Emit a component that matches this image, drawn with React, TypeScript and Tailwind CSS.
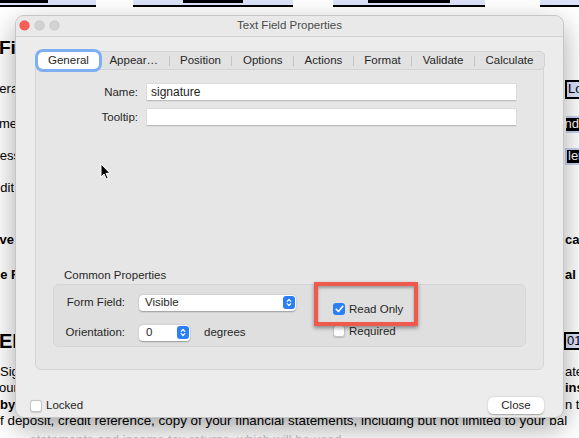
import React from "react";

const tabs = ["General", "Appear…", "Position", "Options", "Actions", "Format", "Validate", "Calculate"];

const Stepper = () => (
  <span className="flex h-[13px] w-[12px] items-center justify-center rounded-[3px] bg-[#2a7ff6]">
    <svg width="6" height="9" viewBox="0 0 6 9" fill="none" stroke="white" strokeWidth="1.2" strokeLinecap="round" strokeLinejoin="round">
      <path d="M1.2 3.3 L3 1.5 L4.8 3.3 M1.2 5.7 L3 7.5 L4.8 5.7" />
    </svg>
  </span>
);

const Box = ({ checked }: { checked?: boolean }) =>
  checked ? (
    <span className="flex h-[12px] w-[12px] items-center justify-center rounded-[3px] bg-[#2a7ff6]">
      <svg width="9" height="8" viewBox="0 0 9 8" fill="none" stroke="white" strokeWidth="1.6" strokeLinecap="round" strokeLinejoin="round">
        <path d="M1.2 4.2 L3.5 6.5 L7.8 1.3" />
      </svg>
    </span>
  ) : (
    <span className="h-[12px] w-[12px] rounded-[3px] border border-[#c3c3c3] bg-white shadow-[0_0.5px_1px_rgba(0,0,0,0.15)]" />
  );

const Doc: React.FC = () => (
  <div className="flex flex-col font-['Liberation_Sans',Arial,sans-serif] text-[13px] text-black">
    {/* top form strip */}
    <div className="flex h-[7px]">
      <div className="flex h-full w-[96px] flex-col border-b-2 border-black bg-[#dde3fb]">
        <div className="h-[3px] w-[48px] bg-black" />
      </div>
      <div className="w-[37px]" />
      <div className="flex h-full w-[160px] border-b-2 border-black bg-[#dde3fb] pl-[50px]">
        <div className="h-[3px] w-[60px] bg-black" />
      </div>
      <div className="w-[40px]" />
      <div className="flex h-full w-[152px] border-b-2 border-black bg-[#dde3fb] pl-[35px]">
        <div className="h-[3px] w-[82px] bg-black" />
      </div>
      <div className="w-[55px]" />
      <div className="h-full flex-1 border-b-2 border-black bg-[#dde3fb]" />
    </div>

    <div className="mt-[31px] flex h-[20px] items-center">
      <span className="-ml-[1px] text-[19px] font-bold">First</span>
    </div>

    <div className="mt-[21px] flex h-[20px] items-center justify-between">
      <div className="flex w-[21px] justify-end overflow-hidden whitespace-nowrap">General</div>
      <div className="flex h-[19px] w-[14px] items-center overflow-hidden whitespace-nowrap border-y-2 border-l-2 border-black bg-[#dde3fb] pl-[1px]">Lo</div>
    </div>

    <div className="mt-[15px] flex h-[20px] items-center justify-between">
      <div className="flex w-[17px] justify-end overflow-hidden whitespace-nowrap">Name</div>
      <div className="flex h-[17px] w-[13px] items-center justify-end overflow-hidden whitespace-nowrap border-y-2 border-[#c9d0f0] bg-black text-white">send</div>
    </div>

    <div className="mt-[12px] flex h-[20px] items-center justify-between">
      <div className="flex w-[20px] justify-end overflow-hidden whitespace-nowrap">Address</div>
      <div className="flex h-[17px] w-[14px] items-center overflow-hidden whitespace-nowrap border-y-2 border-l-2 border-[#c9d0f0] bg-black pl-[1px] text-white">len</div>
    </div>

    <div className="mt-[12px] flex h-[20px] items-center">
      <div className="flex w-[14px] justify-end overflow-hidden whitespace-nowrap">Credit</div>
    </div>

    <div className="mt-[32px] flex h-[20px] items-center justify-between font-bold">
      <div className="flex w-[14px] justify-end overflow-hidden whitespace-nowrap">Have</div>
      <div className="w-[14px] overflow-hidden whitespace-nowrap">cat</div>
    </div>

    <div className="mt-[15px] flex h-[20px] items-center justify-between font-bold">
      <div className="flex w-[19px] justify-end overflow-hidden whitespace-nowrap">The F</div>
      <div className="w-[14px] overflow-hidden whitespace-nowrap">al i</div>
    </div>

    <div className="mt-[45px] flex h-[22px] items-center justify-between">
      <span className="-ml-[1px] text-[20px] font-bold">EF</span>
      <div className="flex h-[18px] w-[15px] items-center overflow-hidden whitespace-nowrap border-2 border-r-0 border-black bg-[#dde3fb] pl-[1px]">01/</div>
    </div>

    <div className="mt-[12px] flex h-[16px] items-center justify-between">
      <span>Signature</span>
      <div className="w-[14px] overflow-hidden whitespace-nowrap">ate</div>
    </div>
    <div className="flex h-[16px] items-center justify-between">
      <span className="-ml-[1px]">our</span>
      <div className="w-[14px] overflow-hidden whitespace-nowrap font-bold">ins</div>
    </div>
    <div className="mt-[1px] flex h-[16px] items-center justify-between">
      <span className="font-bold">by</span>
      <div className="w-[14px] overflow-hidden whitespace-nowrap">n t</div>
    </div>
    <div className="flex h-[16px] items-center overflow-hidden whitespace-nowrap text-[13.4px]">
      f deposit, credit reference, copy of your financial statements, including but not limited to your bal
    </div>
    <div className="mt-[3px] flex h-[16px] items-center overflow-hidden whitespace-nowrap pl-[30px] text-[#c4c4c4]">
      statements and income tax returns, which will be used
    </div>
  </div>
);

const Dialog: React.FC = () => (
  <div className="absolute left-[15px] top-[15px] flex h-[403px] w-[549px] flex-col rounded-[9px] border border-[#c6c6c6] bg-[#ececec] font-['Liberation_Sans',Arial,sans-serif] text-[11.5px] text-[#262626] shadow-[0_10px_28px_rgba(0,0,0,0.35)]">
    {/* title bar */}
    <div className="relative flex h-[21px] shrink-0 items-center justify-center rounded-t-[9px] border-b border-[#d2d2d2] bg-[#e9e9e9]">
      <div className="absolute left-[4px] top-[5px] flex gap-[6px]">
        <span className="h-[9px] w-[9px] rounded-full bg-[#fd5e56] ring-[0.5px] ring-[#e0443e]" />
        <span className="h-[9px] w-[9px] rounded-full bg-[#d2d2d2] ring-[0.5px] ring-[#bdbdbd]" />
        <span className="h-[9px] w-[9px] rounded-full bg-[#d2d2d2] ring-[0.5px] ring-[#bdbdbd]" />
      </div>
      <span className="text-[11.5px] text-[#4a4a4a]">Text Field Properties</span>
    </div>

    <div className="flex flex-1 flex-col px-[19px] pt-[14px]">
      {/* tabs */}
      <div className="relative z-10 -mb-[10px] flex pl-[2px]">
        <div className="flex h-[19px] items-center rounded-[5px] border border-[#d3d3d3] bg-[#e2e2e2]">
          {tabs.map((t, i) => (
            <React.Fragment key={t}>
              {i > 1 && <span className="h-[10px] w-px bg-[#c4c4c4]" />}
              {i === 0 ? (
                <span className="flex h-[17px] items-center rounded-[5px] bg-white px-[10px] ring-[3px] ring-[#7eaff2]">
                  {t}
                </span>
              ) : (
                <span className="px-[10.5px]">{t}</span>
              )}
            </React.Fragment>
          ))}
        </div>
      </div>

      {/* content box */}
      <div className="flex h-[310px] flex-col rounded-[6px] border border-[#d5d5d5] bg-[#e6e6e6] pb-[22px] pt-[23px]">
        <div className="flex items-center">
          <span className="w-[102px] text-right">Name:</span>
          <div className="ml-[9px] flex h-[17px] w-[369px] items-center border-b border-[#bdbdbd] bg-white pl-[4px] text-[12px] text-[#1e1e1e] shadow-[0_0_0_0.5px_#d0d0d0]">
            signature
          </div>
        </div>
        <div className="mt-[8px] flex items-center">
          <span className="w-[102px] text-right">Tooltip:</span>
          <div className="ml-[9px] h-[17px] w-[369px] border-b border-[#bdbdbd] bg-white shadow-[0_0_0_0.5px_#d0d0d0]" />
        </div>

        <div className="mt-auto pl-[28px] leading-[14px]">Common Properties</div>
        <div className="mx-[17px] mt-[2px] flex h-[63px] rounded-[6px] border border-[#d6d6d6] bg-[#dfdfdf] pt-[9px]">
          <div className="flex w-[279px] shrink-0 flex-col gap-[13px]">
            <div className="flex items-center">
              <span className="w-[71px] text-right">Form Field:</span>
              <div className="ml-[14px] flex h-[16px] w-[157px] items-center justify-between rounded-[4px] bg-white pl-[6px] pr-[1px] shadow-[0_0.5px_1.5px_rgba(0,0,0,0.3)]">
                <span>Visible</span>
                <Stepper />
              </div>
            </div>
            <div className="flex items-center">
              <span className="w-[71px] text-right">Orientation:</span>
              <div className="ml-[14px] flex h-[16px] w-[51px] items-center justify-between rounded-[4px] bg-white pl-[7px] pr-[1px] shadow-[0_0.5px_1.5px_rgba(0,0,0,0.3)]">
                <span>0</span>
                <Stepper />
              </div>
              <span className="ml-[14px]">degrees</span>
            </div>
          </div>
          <div className="flex flex-col gap-[10px] pt-[9px] leading-[12px]">
            <div className="flex h-[12px] items-center gap-[4px]">
              <Box checked />
              <span>Read Only</span>
            </div>
            <div className="flex h-[12px] items-center gap-[4px]">
              <Box />
              <span>Required</span>
            </div>
          </div>
        </div>
      </div>

      {/* bottom bar */}
      <div className="mt-[27px] flex items-center justify-between">
        <div className="-ml-[5px] flex items-center gap-[4px]">
          <Box />
          <span>Locked</span>
        </div>
        <button className="flex h-[17px] w-[56px] items-center justify-center rounded-[5px] bg-white text-[11.5px] text-[#262626] shadow-[0_0.5px_1.5px_rgba(0,0,0,0.3)]">
          Close
        </button>
      </div>
    </div>

    {/* annotation frame */}
    <div className="absolute left-[298px] top-[266px] h-[44px] w-[104px] border-[4px] border-[#f05a4c] shadow-[0_2px_4px_rgba(0,0,0,0.4),inset_0_2px_3px_rgba(0,0,0,0.3)]" />

    {/* mouse pointer */}
    <svg className="absolute left-[84px] top-[147px]" width="11" height="17" viewBox="0 0 11 17">
      <path d="M1 1 L1 14 L4 11 L6.3 16 L8.2 15.2 L6 10.3 L10 10.3 Z" fill="black" stroke="white" strokeWidth="1" strokeLinejoin="round" />
    </svg>
  </div>
);

export default function App() {
  return (
    <div className="relative h-[438px] w-[579px] overflow-hidden bg-white">
      <Doc />
      <Dialog />
    </div>
  );
}
